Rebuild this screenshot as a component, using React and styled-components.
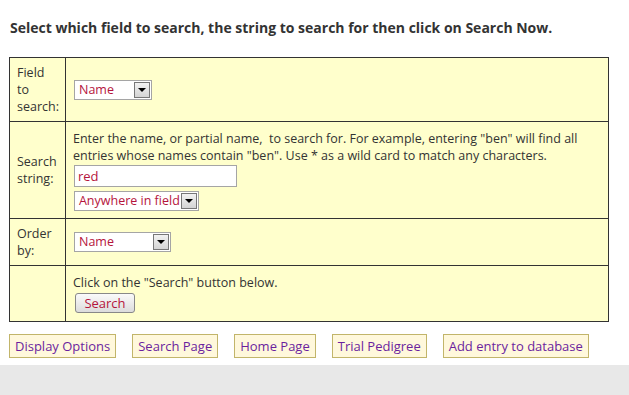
import React from "react";
import styled, { createGlobalStyle } from "styled-components";

const Global = createGlobalStyle`
  html, body { margin: 0; padding: 0; background: #e8e8e8; }
  body { font-family: "Open Sans", "Noto Sans", sans-serif; color: #333; }
`;

const Page = styled.div`
  background: #fff;
  height: 365px;
  padding: 18px 0 0 9px;
  box-sizing: border-box;
`;

const Heading = styled.h1`
  margin: 0 0 19px 1px;
  font-size: 14px;
  line-height: 20px;
  font-weight: 700;
  color: #333;
`;

const Table = styled.table`
  border-collapse: collapse;
  width: 600px;
  background: #ffffcc;
  border: 1px solid #333;
  font-size: 12.5px;
  line-height: 17px;
`;

const Row = styled.tr`
  height: ${(p) => p.$h}px;
`;

const Label = styled.td`
  width: 40px;
  border: 1px solid #333;
  padding: 0 6px 0 7px;
  vertical-align: middle;
  color: #333;
`;

const Cell = styled.td`
  border: 1px solid #333;
  padding: 0 6px 0 7px;
  vertical-align: middle;
  color: #333;
`;

const Stack = styled.div`
  display: flex;
  flex-direction: column;
  align-items: flex-start;
  gap: ${(p) => p.$gap || 0}px;
  margin-top: ${(p) => p.$top || 0}px;
`;

const SelectBox = styled.div`
  display: inline-flex;
  align-items: stretch;
  width: ${(p) => p.$w}px;
  height: 20px;
  box-sizing: border-box;
  border: 1px solid #a5a5a5;
  background: #fff;
  margin-left: 1px;
`;

const SelectValue = styled.span`
  flex: 1;
  padding-left: 4px;
  font-size: 12.5px;
  line-height: 18px;
  white-space: nowrap;
  overflow: hidden;
  color: #b5143c;
`;

const Arrow = styled.span`
  width: 16px;
  flex: none;
  margin: 1px;
  box-sizing: border-box;
  border: 1px solid #777;
  background: linear-gradient(#f2f2f2, #d4d4d4);
  display: flex;
  align-items: center;
  justify-content: center;
  &::after {
    content: "";
    border-left: 4px solid transparent;
    border-right: 4px solid transparent;
    border-top: 4px solid #000;
  }
`;

const TextInput = styled.input`
  width: 163px;
  height: 22px;
  box-sizing: border-box;
  border: 1px solid #a5a5a5;
  margin: 0 0 0 1px;
  padding: 0 3px;
  font-family: "Open Sans", "Noto Sans", sans-serif;
  font-size: 13px;
  color: #b5143c;
  background: #fff;
  outline: none;
`;

const SearchButton = styled.button`
  margin-left: 2px;
  width: 60px;
  height: 20px;
  padding: 0;
  border: 1px solid #888;
  border-radius: 3px;
  background: linear-gradient(#fafafa, #dcdcdc);
  font-family: "Open Sans", "Noto Sans", sans-serif;
  font-size: 13px;
  line-height: 17px;
  color: #b5143c;
`;

const NavBar = styled.div`
  display: flex;
  gap: 16px;
  margin-top: 12px;
`;

const NavButton = styled.a`
  display: block;
  height: 24px;
  box-sizing: border-box;
  padding: 0 5px;
  border: 1px solid #c2b56a;
  background: #fff8dc;
  color: #6b1f9e;
  font-size: 13px;
  line-height: 22px;
  text-decoration: none;
`;

function Select({ w, value }) {
  return (
    <SelectBox $w={w}>
      <SelectValue>{value}</SelectValue>
      <Arrow />
    </SelectBox>
  );
}

export default function App() {
  return (
    <>
      <Global />
      <Page>
        <Heading>
          Select which field to search, the string to search for then click on Search Now.
        </Heading>
        <Table>
          <tbody>
            <Row $h={64}>
              <Label>Field to search:</Label>
              <Cell>
                <Select w={78} value="Name" />
              </Cell>
            </Row>
            <Row $h={97}>
              <Label>Search string:</Label>
              <Cell>
                <Stack>
                  <div>
                    Enter the name, or partial name,&nbsp; to search for. For example, entering "ben" will find all
                    entries whose names contain "ben". Use * as a wild card to match any characters.
                  </div>
                  <Stack $gap={4} $top={1}>
                    <TextInput defaultValue="red" />
                    <Select w={125} value="Anywhere in field" />
                  </Stack>
                </Stack>
              </Cell>
            </Row>
            <Row $h={47}>
              <Label>Order by:</Label>
              <Cell>
                <Select w={97} value="Name" />
              </Cell>
            </Row>
            <Row $h={56}>
              <Label></Label>
              <Cell>
                <Stack $gap={2}>
                  <div>Click on the "Search" button below.</div>
                  <SearchButton>Search</SearchButton>
                </Stack>
              </Cell>
            </Row>
          </tbody>
        </Table>
        <NavBar>
          <NavButton href="#">Display Options</NavButton>
          <NavButton href="#">Search Page</NavButton>
          <NavButton href="#">Home Page</NavButton>
          <NavButton href="#">Trial Pedigree</NavButton>
          <NavButton href="#">Add entry to database</NavButton>
        </NavBar>
      </Page>
    </>
  );
}
